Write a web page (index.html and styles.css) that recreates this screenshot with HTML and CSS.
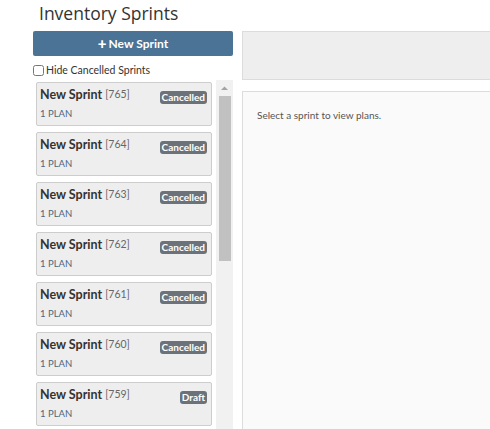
FILE: index.html
```html
<!DOCTYPE html>
<html>
<head>
<meta charset="utf-8">
<link rel="stylesheet" href="styles.css">
</head>
<body>
<div class="page">
  <div class="left">
    <h1 class="title">Inventory Sprints</h1>
    <button class="new-btn"><span class="plus">+</span>New Sprint</button>
    <label class="hide"><input type="checkbox" class="cb"><span>Hide Cancelled Sprints</span></label>
    <div class="list-wrap">
      <div class="list">
        <div class="card"><div class="row"><span class="name">New Sprint</span><span class="num">[765]</span><span class="badge">Cancelled</span></div><div class="plan">1 PLAN</div></div>
        <div class="card"><div class="row"><span class="name">New Sprint</span><span class="num">[764]</span><span class="badge">Cancelled</span></div><div class="plan">1 PLAN</div></div>
        <div class="card"><div class="row"><span class="name">New Sprint</span><span class="num">[763]</span><span class="badge">Cancelled</span></div><div class="plan">1 PLAN</div></div>
        <div class="card"><div class="row"><span class="name">New Sprint</span><span class="num">[762]</span><span class="badge">Cancelled</span></div><div class="plan">1 PLAN</div></div>
        <div class="card"><div class="row"><span class="name">New Sprint</span><span class="num">[761]</span><span class="badge">Cancelled</span></div><div class="plan">1 PLAN</div></div>
        <div class="card"><div class="row"><span class="name">New Sprint</span><span class="num">[760]</span><span class="badge">Cancelled</span></div><div class="plan">1 PLAN</div></div>
        <div class="card"><div class="row"><span class="name">New Sprint</span><span class="num">[759]</span><span class="badge">Draft</span></div><div class="plan">1 PLAN</div></div>
      </div>
      <div class="scrollbar">
        <svg class="arrow" width="17" height="16" viewBox="0 0 17 16"><path d="M5 10 L8.5 6.5 L12 10 Z" fill="#a3a3a3"/></svg>
        <div class="thumb"></div>
      </div>
    </div>
  </div>
  <div class="right">
    <div class="toolbar"></div>
    <div class="content">Select a sprint to view plans.</div>
  </div>
</div>
</body>
</html>
```

FILE: styles.css
```css
html, body {
  margin: 0;
  padding: 0;
  overflow: hidden;
  background: #fff;
  font-family: Lato, "Open Sans", sans-serif;
  color: #333;
}
.page {
  display: flex;
  gap: 9px;
  padding-left: 33px;
  width: 720px;
  height: 429px;
  overflow: hidden;
}
.left {
  width: 200px;
  flex: none;
  display: flex;
  flex-direction: column;
}
.title {
  margin: 0;
  padding: 2px 0 0 6px;
  height: 29px;
  box-sizing: border-box;
  font-family: "Open Sans", sans-serif;
  font-size: 17.5px;
  font-weight: 400;
  line-height: 22px;
  color: #333;
  flex: none;
}
.new-btn {
  flex: none;
  height: 25px;
  margin-top: 2px;
  border: none;
  border-radius: 2px;
  background: #4a7396;
  color: #fff;
  font-family: inherit;
  font-weight: 700;
  font-size: 12px;
  padding: 0;
  display: flex;
  align-items: center;
  justify-content: center;
}
.plus {
  font-size: 15px;
  font-weight: 900;
  margin-right: 2px;
  line-height: 1;
}
.hide {
  flex: none;
  display: flex;
  align-items: center;
  gap: 2px;
  margin-top: 8px;
  height: 12px;
  font-size: 10.5px;
  color: #333;
}
.cb {
  margin: 0;
  width: 11px;
  height: 11px;
}
.list-wrap {
  flex: none;
  margin-top: 4px;
  display: flex;
  gap: 4px;
  height: 360px;
}
.list {
  width: 177px;
  margin-left: 3px;
  padding-top: 2px;
  display: flex;
  flex-direction: column;
  gap: 6px;
  overflow: hidden;
}
.scrollbar {
  width: 17px;
  background: #f1f1f1;
  display: flex;
  flex-direction: column;
  align-items: center;
}
.arrow {
  display: block;
  flex: none;
  height: 16px;
}
.thumb {
  flex: none;
  width: 12px;
  height: 165px;
  background: #c1c1c1;
}
.card {
  flex: none;
  height: 44px;
  box-sizing: border-box;
  border: 1px solid #cdcdcd;
  border-radius: 2px;
  background: #eeeeee;
  padding: 2px 4px 0 3px;
}
.row {
  display: flex;
  align-items: center;
  height: 18px;
}
.name {
  font-weight: 700;
  font-size: 12.5px;
  color: #333;
}
.num {
  font-size: 10.5px;
  color: #666;
  margin-left: 3px;
}
.badge {
  margin-left: auto;
  margin-top: 6px;
  background: #6b7279;
  color: #fff;
  font-weight: 700;
  font-size: 10px;
  line-height: 13px;
  padding: 0 2px;
  border-radius: 3px;
}
.plan {
  margin-top: 5px;
  font-size: 9.5px;
  color: #4d6680;
}
.right {
  width: 300px;
  flex: none;
  display: flex;
  flex-direction: column;
  padding-top: 31px;
  gap: 11px;
}
.toolbar {
  flex: none;
  height: 49px;
  box-sizing: border-box;
  border: 1px solid #dcdcdc;
  background: #eeeeee;
}
.content {
  flex: none;
  height: 400px;
  box-sizing: border-box;
  border: 1px solid #dcdcdc;
  background: #fafafa;
  padding: 17px 14px;
  font-size: 10px;
  color: #555;
}
```
